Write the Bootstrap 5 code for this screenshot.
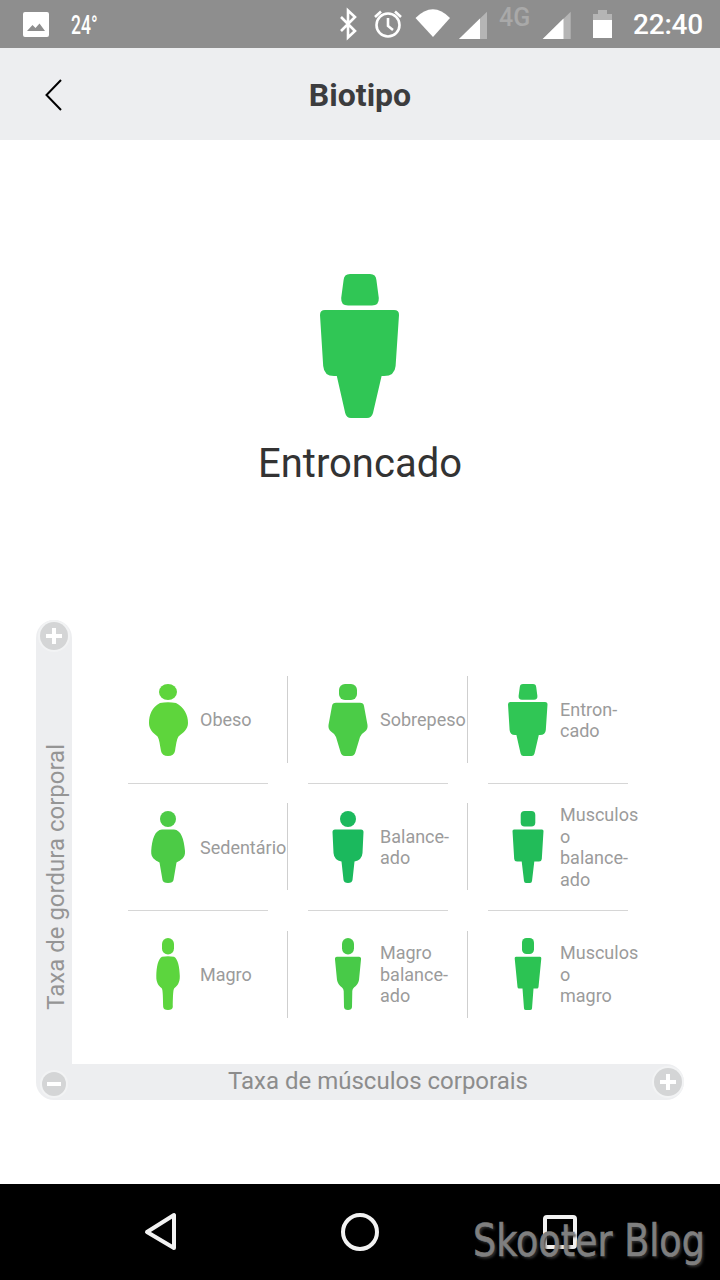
<!DOCTYPE html>
<html lang="pt">
<head>
  <meta charset="UTF-8">
  <title>Biotipo</title>
  <meta name="viewport" content="width=device-width, initial-scale=1">
  <link href="https://cdn.jsdelivr.net/npm/bootstrap@5.3.3/dist/css/bootstrap.min.css" rel="stylesheet">
  <style>
    body { font-family: Roboto, "Liberation Sans", sans-serif; background: #fff; }
    .phone { width: 720px; height: 1280px; overflow: hidden; }

    .status-bar { height: 48px; background: #8e8e8e; color: #fff; padding: 0 17px 0 23px; }
    .status-temp { font-size: 25px; font-weight: 500; width: 26px; margin: 3px 0 0 22px; transform: scaleX(.7); transform-origin: left center; }
    .status-time { font-size: 28px; font-weight: 500; margin: 2px 0 0 21px; letter-spacing: -.2px; }

    .title-bar { height: 92px; background: #edeef0; }
    .title-bar h1 { font-size: 32px; font-weight: 700; color: #3c3c3e; margin: 2px 0 0; }
    .back-arrow { left: 45px; top: 31px; }

    .hero { padding-top: 134px; height: 480px; }
    .hero-name { font-size: 40px; color: #333; margin-top: 22px; line-height: 48px; }

    .chart-frame { width: 648px; margin-left: 36px; }
    .axis-y { width: 36px; background: #edeef0; border-radius: 18px 18px 0 0; color: #959595; font-size: 24px; }
    .axis-y span { writing-mode: vertical-rl; transform: rotate(180deg); padding-top: 54px; line-height: 36px; position: relative; left: 2px; }
    .axis-x { height: 36px; background: #edeef0; border-radius: 0 18px 18px 18px; color: #8c8c8c; font-size: 24px; padding: 0 0 2px 36px; }
    .axis-btn { width: 28px; height: 28px; background: #d4d5d6; box-shadow: 0 0 0 2px #f2f3f4; }
    .axis-btn svg { display: block; }
    .btn-top { left: 4px; top: 2px; }
    .btn-minus { left: 6px; top: 8px; width: 24px; height: 24px; }
    .btn-right { right: 2px; top: 4px; }

    .plot { padding: 56px 0 46.4px 56px; }
    .plot-grid { display: grid; grid-template-columns: repeat(3, 180px); }
    .fig-cell { width: 160px; height: 87px; padding-left: 20px; gap: 12px; }
    .fig-cell.with-line { border-right: 1px solid #cfcfcf; }
    .fig-cell svg { flex: 0 0 40px; }
    .fig-label { font-size: 18px; line-height: 21.5px; color: #9b9b9b; white-space: nowrap; padding-top: 1px; }
    .rule { width: 140px; height: 1px; background: #d6d6d6; margin: 19.65px 0; }

    .c-obeso { color: #5ed53c; }
    .c-sobre { color: #4bcc47; }
    .c-entro { color: #30c655; }
    .c-seden { color: #4ccb46; }
    .c-balan { color: #1bb95d; }
    .c-mubal { color: #22bc59; }
    .c-magro { color: #5cd53e; }
    .c-mabal { color: #48ca48; }
    .c-mumag { color: #2cc353; }

    .nav-bar { height: 96px; background: #000; }
    .watermark { left: 473px; top: 29px; font-family: "DejaVu Sans", sans-serif; font-size: 44px; line-height: 56px; color: #7f7f7f; -webkit-text-stroke: .7px #7f7f7f; text-shadow: 2px 2px 3px #333; white-space: nowrap; transform: scaleX(.83); transform-origin: left center; }
  </style>
</head>
<body>
  <svg width="0" height="0" class="position-absolute">
    <symbol id="f-obeso" viewBox="0 0 40 72">
      <ellipse cx="20" cy="8" rx="9" ry="8"/>
      <path d="M12 19Q20 17.5 28 19C36 23 40 31 40 39C40 45 35 49 31 52C29 54 28.5 58 27 67Q26 72 20 72Q14 72 13 67C11.5 58 11 54 9 52C5 49 1 45 1 39C1 31 4 23 12 19Z"/>
    </symbol>
    <symbol id="f-sobre" viewBox="0 0 40 72">
      <rect x="11" width="18" height="16" rx="6"/>
      <path d="M8 18.7H32Q35.5 18.7 36 22L39.5 41Q40 45 37 47.5Q33 50 32 53L27.5 68Q26.5 72 23 72H17Q13.5 72 12.5 68L8 53Q7 50 3 47.5Q0 45 .5 41L4 22Q4.5 18.7 8 18.7Z"/>
    </symbol>
    <symbol id="f-entro" viewBox="0 0 40 72">
      <path d="M15 0H25Q28 0 28.2 3L29.4 12Q29.6 15.8 26 15.8H14Q10.4 15.8 10.6 12L11.8 3Q12 0 15 0Z"/>
      <path d="M2.5 18H37Q39.6 18 39.5 20.5L37.8 46Q37.4 51 32 51H30.8L26.5 69.5Q25.8 72 23.5 72H15.5Q13.2 72 12.6 69.5L8.4 51H7Q2 51 1.6 46L0 20.5Q0 18 2.5 18Z"/>
    </symbol>
    <symbol id="f-seden" viewBox="0 0 40 72">
      <circle cx="20" cy="8" r="8"/>
      <path d="M14 18.5H26C33 19 36 28 37 40C37.5 47 33 49 28.5 51.5L25.5 69Q25 72 20 72Q15 72 14.5 69L11.5 51.5C7 49 2.8 47 3.2 40C4 28 7 19 14 18.5Z"/>
    </symbol>
    <symbol id="f-balan" viewBox="0 0 40 72">
      <circle cx="20" cy="8" r="8"/>
      <path d="M7 18.5H33Q35.5 18.5 35.5 21L34.5 42Q34 49 26.5 50.5L24.5 69Q24 72 20 72Q16 72 15.5 69L13.5 50.5Q6 49 5.5 42L4.5 21Q4.5 18.5 7 18.5Z"/>
    </symbol>
    <symbol id="f-mubal" viewBox="0 0 40 72">
      <rect x="12.7" width="14.6" height="15.5" rx="4"/>
      <path d="M6 18.5H34Q35.5 18.5 35.5 20L33.8 48Q33.6 50.5 31 50.5H26.3L24 70Q23.8 72 22 72H18Q16.2 72 16 70L13.7 50.5H9Q6.4 50.5 6.2 48L4.5 20Q4.5 18.5 6 18.5Z"/>
    </symbol>
    <symbol id="f-magro" viewBox="0 0 40 72">
      <rect x="14" width="12" height="16.5" rx="6"/>
      <path d="M14 18.8Q20 17.8 26 18.8C30 21 31.5 29 31.8 38C32 45 29 48 26.5 50C25.5 51 25 53 24.8 69Q24.5 72 20 72Q15.5 72 15.2 69C15 53 14.5 51 13.5 50C11 48 8 45 8.3 38C8.5 29 10 21 14 18.8Z"/>
    </symbol>
    <symbol id="f-mabal" viewBox="0 0 40 72">
      <rect x="14" width="12" height="16.5" rx="6"/>
      <path d="M9 18.8H31Q33.3 18.8 33 21.5L31 42Q30 47 26 49.5Q24.5 50.5 24.3 53L24 69Q23.8 72 20 72Q16.2 72 16 69L15.7 53Q15.5 50.5 14 49.5Q10 47 9 42L7 21.5Q6.7 18.8 9 18.8Z"/>
    </symbol>
    <symbol id="f-mumag" viewBox="0 0 40 72">
      <rect x="14" width="12" height="16" rx="4.5"/>
      <path d="M8 18.8H32Q33.5 18.8 33.3 20.5L30.5 49Q30.3 50.5 29 50.5H25.5L24 70.5Q23.8 72 22 72H18Q16.2 72 16 70.5L14.5 50.5H11Q9.7 50.5 9.5 49L6.7 20.5Q6.5 18.8 8 18.8Z"/>
    </symbol>
  </svg>

  <div class="phone d-flex flex-column">
    <!-- barra de estado -->
    <div class="status-bar d-flex align-items-center flex-shrink-0">
      <svg width="26" height="25" viewBox="0 0 26 25" fill="#fff">
        <path d="M2 0H24Q26 0 26 2V23Q26 25 24 25H2Q0 25 0 23V2Q0 0 2 0ZM4 19H22L16.5 11.5L12.5 16L9.5 13Z" fill-rule="evenodd"/>
      </svg>
      <span class="status-temp">24°</span>
      <svg class="ms-auto" width="273" height="48" viewBox="339 0 273 48">
        <path d="M341 17L355 31L348 37.5V10.5L355 17L341 31" fill="none" stroke="#fff" stroke-width="2.6"/>
        <g fill="none" stroke="#fff" stroke-width="2.6">
          <circle cx="388" cy="25" r="11.5"/>
          <path d="M388 18V26L393 30"/>
          <path d="M375 17L381 11.5M401 17L395 11.5"/>
        </g>
        <path d="M415.5 18Q433 .6 450 18L433 37Z" fill="#fff"/>
        <path d="M459 39L487 11.7V39Z" fill="#b5b5b5"/>
        <path d="M459 39L480 18.5V39Z" fill="#fff"/>
        <text x="499" y="26" font-family="Roboto" font-size="25" font-weight="500" fill="#a9a9a9">4G</text>
        <path d="M542.7 39L570.7 11.7V39Z" fill="#b5b5b5"/>
        <path d="M542.7 39L563.5 18.5V39Z" fill="#fff"/>
        <path d="M598 10H607V14H612V20H593V14H598Z" fill="#b5b5b5"/>
        <rect x="593" y="20" width="19" height="18" fill="#fff"/>
      </svg>
      <span class="status-time">22:40</span>
    </div>

    <!-- titulo -->
    <div class="title-bar position-relative d-flex align-items-center justify-content-center flex-shrink-0">
      <svg class="back-arrow position-absolute" width="18" height="32" viewBox="0 0 18 32" fill="none" stroke="#000" stroke-width="2">
        <path d="M16 1L1.5 16L16 31"/>
      </svg>
      <h1>Biotipo</h1>
    </div>

    <div class="flex-grow-1">
      <div class="hero d-flex flex-column align-items-center">
        <svg class="c-entro" width="80" height="144" fill="currentColor"><use href="#f-entro"/></svg>
        <div class="hero-name">Entroncado</div>
      </div>

      <div class="chart-frame">
        <div class="d-flex">
          <div class="axis-y position-relative d-flex justify-content-center align-items-end">
            <div class="axis-btn btn-top position-absolute rounded-circle">
              <svg width="28" height="28" fill="#fff"><path d="M12 6H16V12H22V16H16V22H12V16H6V12H12Z"/></svg>
            </div>
            <span>Taxa de gordura corporal</span>
          </div>
          <div class="plot flex-grow-1">
            <div class="plot-grid">
              <div>
                <div class="fig-cell with-line d-flex align-items-center">
                  <svg class="c-obeso" width="40" height="72" fill="currentColor"><use href="#f-obeso"/></svg>
                  <div class="fig-label">Obeso</div>
                </div>
                <div class="rule"></div>
              </div>
              <div>
                <div class="fig-cell with-line d-flex align-items-center">
                  <svg class="c-sobre" width="40" height="72" fill="currentColor"><use href="#f-sobre"/></svg>
                  <div class="fig-label">Sobrepeso</div>
                </div>
                <div class="rule"></div>
              </div>
              <div>
                <div class="fig-cell d-flex align-items-center">
                  <svg class="c-entro" width="40" height="72" fill="currentColor"><use href="#f-entro"/></svg>
                  <div class="fig-label">Entron-<br>cado</div>
                </div>
                <div class="rule"></div>
              </div>
              <div>
                <div class="fig-cell with-line d-flex align-items-center">
                  <svg class="c-seden" width="40" height="72" fill="currentColor"><use href="#f-seden"/></svg>
                  <div class="fig-label">Sedentário</div>
                </div>
                <div class="rule"></div>
              </div>
              <div>
                <div class="fig-cell with-line d-flex align-items-center">
                  <svg class="c-balan" width="40" height="72" fill="currentColor"><use href="#f-balan"/></svg>
                  <div class="fig-label">Balance-<br>ado</div>
                </div>
                <div class="rule"></div>
              </div>
              <div>
                <div class="fig-cell d-flex align-items-center">
                  <svg class="c-mubal" width="40" height="72" fill="currentColor"><use href="#f-mubal"/></svg>
                  <div class="fig-label">Musculos<br>o<br>balance-<br>ado</div>
                </div>
                <div class="rule"></div>
              </div>
              <div>
                <div class="fig-cell with-line d-flex align-items-center">
                  <svg class="c-magro" width="40" height="72" fill="currentColor"><use href="#f-magro"/></svg>
                  <div class="fig-label">Magro</div>
                </div>
              </div>
              <div>
                <div class="fig-cell with-line d-flex align-items-center">
                  <svg class="c-mabal" width="40" height="72" fill="currentColor"><use href="#f-mabal"/></svg>
                  <div class="fig-label">Magro<br>balance-<br>ado</div>
                </div>
              </div>
              <div>
                <div class="fig-cell d-flex align-items-center">
                  <svg class="c-mumag" width="40" height="72" fill="currentColor"><use href="#f-mumag"/></svg>
                  <div class="fig-label">Musculos<br>o<br>magro</div>
                </div>
              </div>
            </div>
          </div>
        </div>
        <div class="axis-x position-relative d-flex align-items-center justify-content-center">
          <div class="axis-btn btn-minus position-absolute rounded-circle">
            <svg width="24" height="24" fill="#fff"><rect x="5" y="10" width="14" height="4"/></svg>
          </div>
          <span>Taxa de músculos corporais</span>
          <div class="axis-btn btn-right position-absolute rounded-circle">
            <svg width="28" height="28" fill="#fff"><path d="M12 6H16V12H22V16H16V22H12V16H6V12H12Z"/></svg>
          </div>
        </div>
      </div>
    </div>

    <!-- navegacao android -->
    <div class="nav-bar position-relative flex-shrink-0">
      <svg class="position-absolute top-0 start-0" width="720" height="96" viewBox="0 1184 720 96" fill="none" stroke="#f2f2f2" stroke-width="4" stroke-linejoin="round">
        <path d="M174 1215V1248L147 1232Z"/>
        <circle cx="360" cy="1232" r="17"/>
        <rect x="545" y="1217" width="30" height="30" rx="2"/>
      </svg>
      <div class="watermark position-absolute">Skooter Blog</div>
    </div>
  </div>

  <script src="https://cdn.jsdelivr.net/npm/bootstrap@5.3.3/dist/js/bootstrap.bundle.min.js"></script>
</body>
</html>
